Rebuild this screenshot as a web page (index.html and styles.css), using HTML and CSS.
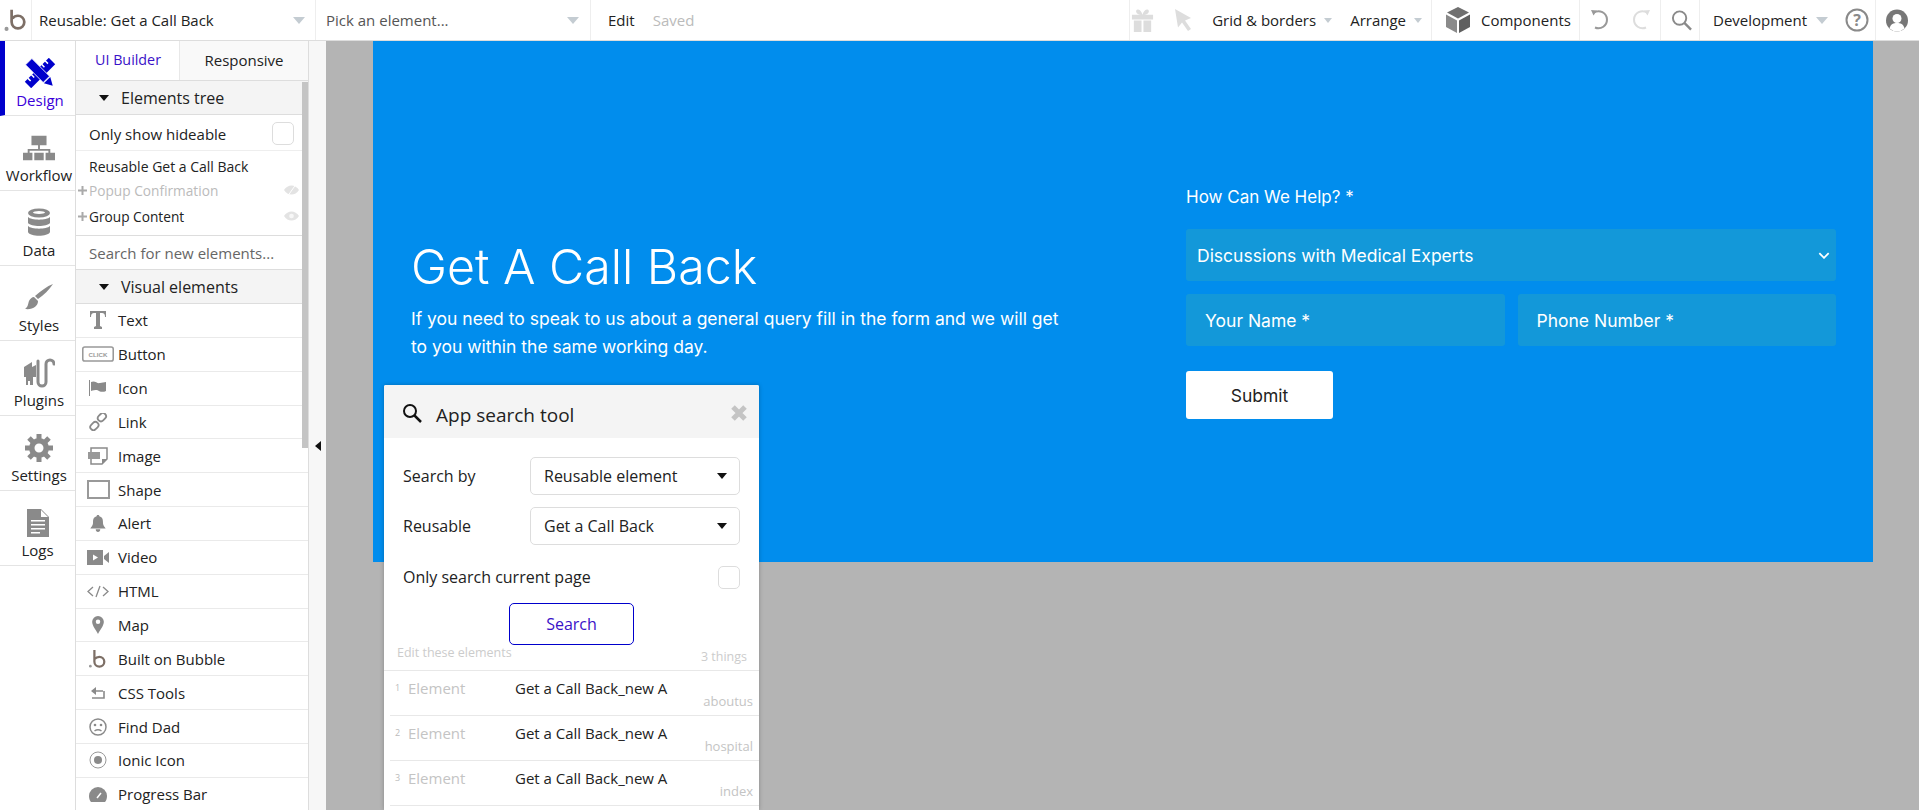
FILE: index.html
```html
<!DOCTYPE html>
<html lang="en">
<head>
<meta charset="utf-8">
<title>Reusable: Get a Call Back</title>
<link rel="stylesheet" href="styles.css">
</head>
<body>
<header class="topbar">
  <div class="cell logo-cell">
    <svg class="logo" viewBox="0 0 26 28"><circle cx="3" cy="24.500" r="2.400" fill="#999"/><path d="M9 2v14.500a7.500 7.500 0 1 0 7.500-7.500c-2.600 0-5 1.300-6.500 3.300" fill="none" stroke="#7d6f66" stroke-width="3.200"/></svg>
  </div>
  <div class="cell picker picker-a"><span>Reusable: Get a Call Back</span><i class="caret"></i></div>
  <div class="cell picker picker-b"><span class="muted-dark">Pick an element...</span><i class="caret"></i></div>
  <div class="cell edit-cell"><span>Edit</span><span class="saved">Saved</span></div>
  <div class="cell tools">
    <svg class="ic gift" viewBox="0 0 26 26"><path fill="#ddd" d="M2 7h22v5H2zM4 13h8v12H4zM14 13h8v12h-8zM11.500 7C6 7 5 2 8 1.500c2.500-.4 4 2.500 5 5.500 1-3 2.500-5.900 5-5.500C21 2 20 7 14.500 7z"/></svg>
    <svg class="ic cursor" viewBox="0 0 18 22"><path fill="#ddd" d="M0 0l16 9-6 2.500 6 8.500-3 2-6-8.500-4 5z"/></svg>
    <span class="tool-label grid-l">Grid &amp; borders</span><i class="caret small"></i>
    <span class="tool-label arrange-l">Arrange</span><i class="caret small"></i>
  </div>
  <div class="cell comp">
    <svg class="ic cube" viewBox="0 0 24 26"><path fill="#707070" d="M12 0l11 5.500-11 6-11-6z"/><path fill="#8a8a8a" d="M0 7.500l11 6V26L0 20z"/><path fill="#5f5f5f" d="M24 7.500l-11 6V26l11-6z"/></svg>
    <span class="tool-label">Components</span>
  </div>
  <div class="cell history">
    <svg class="ic undo" viewBox="0 0 20 22"><path fill="none" stroke="#999" stroke-width="2" d="M4 3.500a8.500 8.500 0 1 1 1 15"/><path fill="#999" d="M1 1l6 .5-3.500 5z"/></svg>
    <svg class="ic redo" viewBox="0 0 20 22"><path fill="none" stroke="#ddd" stroke-width="2" d="M16 3.500a8.500 8.500 0 1 0-1 15"/><path fill="#ddd" d="M19 1l-6 .5 3.500 5z"/></svg>
  </div>
  <div class="cell find">
    <svg class="ic search-i" viewBox="0 0 22 22"><circle cx="9" cy="9" r="7" fill="none" stroke="#8a8a8a" stroke-width="2"/><path d="M14 14l7 7" stroke="#8a8a8a" stroke-width="2.500"/></svg>
  </div>
  <div class="cell dev">
    <span class="tool-label">Development</span><i class="caret"></i>
    <svg class="ic help" viewBox="0 0 24 24"><circle cx="12" cy="12" r="10.500" fill="none" stroke="#8a8a8a" stroke-width="2"/><text x="12" y="17.500" text-anchor="middle" class="help-t">?</text></svg>
  </div>
  <div class="cell user">
    <svg class="ic user-i" viewBox="0 0 22 22"><circle cx="11" cy="11" r="11" fill="#777"/><circle cx="11" cy="9" r="4.500" fill="#fff"/><path d="M3.500 19c1-4.500 4-5.500 7.500-5.500s6.500 1 7.500 5.500a11 11 0 0 1-15 0z" fill="#fff"/></svg>
  </div>
</header>

<div class="workspace">
  <nav class="nav">
    <a class="nav-item active">
      <svg class="nav-ic" viewBox="0 0 30 30">
        <g transform="rotate(-45 15 15)"><rect x="-2" y="10.500" width="34" height="9" fill="#0000cc"/><path fill="#fff" d="M2 10h1.500v4H2zM7 10h1.500v4H7zM21.500 10H23v4h-1.500zM26.500 10H28v4h-1.500z"/></g>
        <g transform="rotate(45 15 15)"><rect x="-1" y="10.500" width="25" height="9" fill="#0000cc" stroke="#fff" stroke-width=".8"/><path fill="#0000cc" d="M25 10.500L33 15l-8 4.500z"/></g>
      </svg>
      <span>Design</span>
    </a>
    <a class="nav-item">
      <svg class="nav-ic" viewBox="0 0 34 30"><path fill="#8a8a8a" d="M9 2h16v10H9zM16 12h2v6h-2zM5 16h24v2H5zM5 16h2v5H5zM27 16h2v5h-2zM0 20h10v8H0zM12 20h10v8H12zM24 20h10v8H24z"/></svg>
      <span>Workflow</span>
    </a>
    <a class="nav-item">
      <svg class="nav-ic" viewBox="0 0 24 30"><ellipse cx="12" cy="5" rx="11" ry="4.500" fill="#8a8a8a"/><ellipse cx="12" cy="4.500" rx="6" ry="1.500" fill="#fff"/><path fill="#8a8a8a" d="M1 9c3 3.500 19 3.500 22 0v6c-3 4-19 4-22 0zM1 18c3 3.500 19 3.500 22 0v6c-2 5-20 5-22 0z"/></svg>
      <span>Data</span>
    </a>
    <a class="nav-item">
      <svg class="nav-ic" viewBox="0 0 30 30"><path fill="#8a8a8a" d="M29 1c-4 6-9 11-15 15l-3-3C17 8 23 3 29 1zM10 14l4 4c0 5-5 9-13 8 3-2 3-5 4-8 1-2 3-4 5-4z"/></svg>
      <span>Styles</span>
    </a>
    <a class="nav-item">
      <svg class="nav-ic" viewBox="0 0 32 30"><path fill="#8a8a8a" d="M1 9L9 4v5l4-2v12h-3v8H7v-4H5v4H3v-8H1z"/><path fill="none" stroke="#8a8a8a" stroke-width="3" stroke-linecap="round" d="M15 3v21a4 4 0 0 0 8 0V6a4 4 0 0 1 8 0"/></svg>
      <span>Plugins</span>
    </a>
    <a class="nav-item">
      <svg class="nav-ic" viewBox="0 0 30 30"><circle cx="15" cy="15" r="7.250" fill="none" stroke="#8a8a8a" stroke-width="5.500"/><path stroke="#8a8a8a" stroke-width="5" d="M15 1v7M15 22v7M1 15h7M22 15h7M5 5l5 5M20 20l5 5M25 5l-5 5M10 20l-5 5"/></svg>
      <span>Settings</span>
    </a>
    <a class="nav-item">
      <svg class="nav-ic" viewBox="0 0 24 30"><path fill="#8a8a8a" d="M1 1h14l8 8v20H1z"/><path fill="#fff" d="M15 2l7 7h-7zM5 12h14v1.500H5zM5 16h14v1.500H5zM5 20h14v1.500H5zM5 24h9v1.500H5z"/></svg>
      <span>Logs</span>
    </a>
  </nav>

  <aside class="panel">
    <div class="tabs"><div class="tab on">UI Builder</div><div class="tab">Responsive</div></div>
    <div class="scroll-track"><div class="scroll-thumb"></div></div>
    <div class="section"><i class="down"></i>Elements tree</div>
    <div class="hideable"><span>Only show hideable</span><i class="check"></i></div>
    <div class="tree">
      <div class="node root">Reusable Get a Call Back</div>
      <div class="node faded"><svg class="plus" viewBox="0 0 9 9"><path d="M0 4.500h9M4.500 0v9" stroke="#aaa" stroke-width="2"/></svg>Popup Confirmation
        <svg class="eye" viewBox="0 0 16 10"><path fill="#e3e3e3" d="M0 5c4-6.500 12-6.500 16 0-4 6.500-12 6.500-16 0z"/><path stroke="#fff" d="M12 0L5 10"/></svg></div>
      <div class="node"><svg class="plus" viewBox="0 0 9 9"><path d="M0 4.500h9M4.500 0v9" stroke="#aaa" stroke-width="2"/></svg>Group Content
        <svg class="eye" viewBox="0 0 16 10"><path fill="#e3e3e3" d="M0 5c4-6.500 12-6.500 16 0-4 6.500-12 6.500-16 0z"/><circle cx="8" cy="5" r="2.500" fill="#f7f7f7"/></svg></div>
    </div>
    <div class="search-new">Search for new elements...</div>
    <div class="section vis"><i class="down"></i>Visual elements</div>
    <ul class="items">
      <li><span class="slot"><svg class="e" viewBox="0 0 18 18"><path fill="#8a8a8a" d="M1 0h16v6h-1c0-3-1-4-3-4h-2v13l2 1v2H5v-2l2-1V2H5C3 2 2 3 2 6H1z"/></svg></span>Text</li>
      <li><span class="slot"><svg class="e wide" viewBox="0 0 31 15"><rect x=".75" y=".75" width="29.500" height="13.500" rx="2" fill="#fff" stroke="#999" stroke-width="1.500"/><text x="15.500" y="10" text-anchor="middle" class="click">CLICK</text></svg></span>Button</li>
      <li><span class="slot"><svg class="e" viewBox="0 0 20 16"><path fill="#8a8a8a" d="M1 0h1v16H1zM3 2c4-2 6 2 9 1 2 0 4-1 6-1v9c-4 2-7 0-9-1-2 0-4 0-6 1z"/></svg></span>Icon</li>
      <li><span class="slot"><svg class="e" viewBox="0 0 20 20"><g fill="none" stroke="#8a8a8a" stroke-width="2"><rect x="9.500" y="1.500" width="10" height="7" rx="3.500" transform="rotate(-45 14 5)"/><rect x="1" y="11" width="10" height="7" rx="3.500" transform="rotate(-45 6 14.500)"/></g></svg></span>Link</li>
      <li><span class="slot"><svg class="e" viewBox="0 0 20 18"><path fill="#fff" stroke="#8a8a8a" stroke-width="1.500" d="M3 1h16v11l-5 5H3z"/><rect y="5" width="12" height="7" fill="#999"/><path fill="#8a8a8a" d="M14 17v-5h5z"/></svg></span>Image</li>
      <li><span class="slot"><i class="shape"></i></span>Shape</li>
      <li><span class="slot"><svg class="e" viewBox="0 0 18 20"><path fill="#8a8a8a" d="M9 1c1 0 1.500.5 1.500 1.500C14 3.500 14.500 6 14.500 9c0 4 1.500 5 3 7H.5c1.500-2 3-3 3-7 0-3 .5-5.500 4-6.500C7.500 1.500 8 1 9 1zM6.500 17h5c0 2-1 3-2.500 3s-2.500-1-2.500-3z"/></svg></span>Alert</li>
      <li><span class="slot"><svg class="e wide2" viewBox="0 0 22 15"><path fill="#8a8a8a" d="M0 0h16v15H0zM17 6l5-4v11l-5-4z"/><path fill="#fff" d="M6 4.500l5 3-5 3z"/></svg></span>Video</li>
      <li><span class="slot"><svg class="e wide2" viewBox="0 0 22 12"><path fill="none" stroke="#8a8a8a" stroke-width="1.300" d="M6 1.500L1 6l5 4.500M16 1.500L21 6l-5 4.500M13 .5L9 11.500"/></svg></span>HTML</li>
      <li><span class="slot"><svg class="e" viewBox="0 0 14 20"><path fill="#8a8a8a" fill-rule="evenodd" d="M7 0a6.500 6.500 0 0 1 6.500 6.500C13.500 11 9 16 7 20 5 16 .5 11 .5 6.500A6.500 6.500 0 0 1 7 0zm0 4a2.500 2.500 0 1 0 0 5 2.500 2.500 0 0 0 0-5z"/></svg></span>Map</li>
      <li><span class="slot"><svg class="e" viewBox="0 0 20 20"><circle cx="1.500" cy="18" r="1.500" fill="#999"/><path d="M6 0v13a5.500 5.500 0 1 0 5.500-5.500C9.500 7.500 7.500 8.500 6.500 10" fill="none" stroke="#7d6f66" stroke-width="2.500"/></svg></span>Built on Bubble</li>
      <li><span class="slot"><svg class="e css" viewBox="0 0 14 12"><path fill="none" stroke="#8a8a8a" stroke-width="1.600" d="M12 4H3M13 4v7H1"/><path fill="#8a8a8a" d="M5 0v8L0 4z"/></svg></span>CSS Tools</li>
      <li><span class="slot"><svg class="e" viewBox="0 0 18 18"><circle cx="9" cy="9" r="8" fill="none" stroke="#8a8a8a" stroke-width="1.500"/><circle cx="6" cy="7" r="1.300" fill="#8a8a8a"/><circle cx="12" cy="7" r="1.300" fill="#8a8a8a"/><path d="M5.500 13c2-1.500 5-1.500 7 0" fill="none" stroke="#8a8a8a" stroke-width="1.500"/></svg></span>Find Dad</li>
      <li><span class="slot"><svg class="e" viewBox="0 0 18 18"><circle cx="9" cy="9" r="8" fill="none" stroke="#999" stroke-width="1"/><circle cx="9" cy="9" r="4" fill="#8a8a8a"/></svg></span>Ionic Icon</li>
      <li><span class="slot"><svg class="e" viewBox="0 0 20 18"><path fill="#8a8a8a" d="M10 2a9 9 0 0 1 9 9c0 3-1 5-2 6H3c-1-1-2-3-2-6a9 9 0 0 1 9-9z"/><path stroke="#fff" stroke-width="1.500" d="M9 13l4-5"/></svg></span>Progress Bar</li>
    </ul>
  </aside>

  <div class="gutter"><i class="collapse"></i></div>

  <main class="canvas">
    <section class="page">
      <div class="intro">
        <h1>Get A Call Back</h1>
        <p>If you need to speak to us about a general query fill in the form and we will get to you within the same working day.</p>
      </div>
      <form class="form">
        <label class="form-label">How Can We Help? *</label>
        <div class="field select"><span>Discussions with Medical Experts</span>
          <svg class="chev" viewBox="0 0 10 6"><path d="M1 1l4 4 4-4" fill="none" stroke="#fff" stroke-width="1.500"/></svg></div>
        <div class="pair">
          <div class="field input">Your Name *</div>
          <div class="field input">Phone Number *</div>
        </div>
        <div class="submit">Submit</div>
      </form>
    </section>
  </main>
</div>

<div class="search-tool">
  <div class="st-head">
    <svg class="st-glass" viewBox="0 0 20 20"><circle cx="8" cy="8" r="6" fill="none" stroke="#111" stroke-width="2"/><path d="M12.500 12.500L19 19" stroke="#111" stroke-width="2.500"/></svg>
    <span class="st-title">App search tool</span>
    <svg class="st-x" viewBox="0 0 18 18"><path d="M3 3l12 12M15 3L3 15" stroke="#c4c4c4" stroke-width="5"/></svg>
  </div>
  <div class="st-body">
    <div class="st-row"><span>Search by</span><div class="st-drop">Reusable element<i class="down"></i></div></div>
    <div class="st-row"><span>Reusable</span><div class="st-drop">Get a Call Back<i class="down"></i></div></div>
    <div class="st-row st-check"><span>Only search current page</span><i class="check"></i></div>
    <div class="st-btn">Search</div>
  </div>
  <div class="st-list-head"><span>Edit these elements</span><span class="things">3 things</span></div>
  <div class="st-result first"><i>1</i><span class="lab">Element</span><span class="val">Get a Call Back_new A</span><span class="where">aboutus</span></div>
  <div class="st-result"><i>2</i><span class="lab">Element</span><span class="val">Get a Call Back_new A</span><span class="where">hospital</span></div>
  <div class="st-result"><i>3</i><span class="lab">Element</span><span class="val">Get a Call Back_new A</span><span class="where">index</span></div>
</div>
</body>
</html>
```
FILE: styles.css
```css
* { box-sizing: border-box; }
html, body { margin: 0; height: 100%; overflow: hidden; }
body { font-family: "Open Sans", sans-serif; font-size: 15px; color: #222; background: #fff; position: relative; display: flex; flex-direction: column; }
i { display: block; font-style: normal; }
h1, p, ul { margin: 0; padding: 0; }

.topbar { display: flex; height: 41px; flex: none; border-bottom: 1px solid #ddd; background: #fff; }
.cell { display: flex; align-items: center; height: 40px; border-right: 1px solid #eee; font-size: 15px; }
.logo-cell { width: 32px; padding-left: 4px; }
.logo { width: 22px; height: 26px; }
.picker { justify-content: space-between; padding: 0 10px 0 7px; }
.picker-a { width: 284px; }
.picker-b { width: 275px; padding-left: 10px; padding-right: 11px; }
.muted-dark { color: #555; }
.caret { width: 0; height: 0; border-left: 6px solid transparent; border-right: 6px solid transparent; border-top: 7px solid #c4ccd2; flex: none; }
.caret.small { border-left-width: 4.500px; border-right-width: 4.500px; border-top-width: 5px; margin-left: 8px; }
.edit-cell { flex: 1; padding-left: 17px; gap: 18px; }
.saved { color: #bbb; }
.ic { display: block; flex: none; }
.tools { border-right: 1px solid #eee; padding-right: 9px; }
.gift { width: 25px; height: 25px; margin-right: 20px; }
.cursor { width: 18px; height: 22px; margin-right: 19px; }
.tool-label { white-space: nowrap; }
.arrange-l { margin-left: 18px; }
.comp { width: 148px; padding-left: 14px; gap: 11px; }
.cube { width: 24px; height: 26px; }
.history { width: 81px; padding-left: 10px; gap: 21px; }
.undo, .redo { width: 20px; height: 22px; }
.find { width: 39px; padding-left: 10px; }
.search-i { width: 21px; height: 22px; }
.dev { width: 176px; padding-left: 13px; }
.dev .caret { margin-left: 9px; }
.help { width: 24px; height: 24px; margin-left: 17px; }
.help-t { font: 700 16px "Open Sans", sans-serif; fill: #8a8a8a; }
.user { border-right: 0; width: 43px; padding-left: 10px; }
.user-i { width: 22px; height: 25px; }

.workspace { flex: 1; display: flex; min-height: 0; }
.nav { width: 76px; flex: none; border-right: 1px solid #ddd; display: flex; flex-direction: column; }
.nav-item { height: 75px; display: flex; flex-direction: column; align-items: center; justify-content: flex-end; padding: 0 0 5px 3px; gap: 2px; border-bottom: 1px solid #e4e4e4; }
.nav-item:last-child { padding-left: 0; }
.nav-item.active { border-left: 5px solid #0000cc; color: #3a00d9; height: 75px; padding-left: 0; border-bottom: 1px solid #e4e4e4; }
.nav-ic { height: 30px; width: 32px; }

.panel { width: 232px; flex: none; position: relative; overflow: hidden; }
.tabs { display: flex; height: 40px; border-bottom: 1px solid #ddd; }
.tab { display: flex; align-items: center; justify-content: center; width: 129px; background: #f9f9f9; border-left: 1px solid #e8e8e8; padding-bottom: 2px; }
.tab.on { width: 103px; background: #fff; color: #3a12c8; border-left: 0; font-size: 14.300px; padding-left: 1px; }
.scroll-track { position: absolute; right: 0; top: 41px; width: 6px; height: 366px; }
.scroll-thumb { height: 100%; background: #c4c4c4; }
.section { height: 34px; background: #f4f4f4; border-bottom: 1px solid #ddd; display: flex; align-items: center; padding-left: 23px; gap: 12px; font-size: 16px; }
.down { width: 0; height: 0; border-left: 5.500px solid transparent; border-right: 5.500px solid transparent; border-top: 6px solid #111; flex: none; }
.hideable { height: 36px; display: flex; align-items: center; justify-content: space-between; padding: 2px 14px 0 13px; border-bottom: 1px solid #eee; }
.check { width: 22px; height: 23px; border: 1px solid #ddd; border-radius: 5px; background: #fff; flex: none; }
.tree { height: 85px; border-bottom: 1px solid #ddd; font-size: 13.700px; }
.node { height: 26px; position: relative; padding-left: 13px; display: flex; align-items: center; }
.node.root { padding-top: 5px; font-size: 14px; }
.node.faded { color: #bbb; }
.node:last-child { height: 27px; }
.plus { position: absolute; left: 2px; top: 9px; width: 9px; height: 9px; display: block; }
.eye { position: absolute; right: 9px; top: 8px; width: 15px; height: 10px; }
.search-new { height: 34px; color: #666; display: flex; align-items: center; padding-left: 13px; border-bottom: 1px solid #ddd; }
.section.vis { height: 34px; }
.items { list-style: none; }
.items li { height: 33.850px; display: flex; align-items: center; border-bottom: 1px solid #eaeaea; }
.slot { width: 42px; flex: none; padding-left: 6px; display: flex; justify-content: center; padding-right: 4px; }
.e { width: 20px; height: 18px; display: block; }
.e.wide { width: 32px; height: 16px; }
.e.wide2 { width: 22px; height: 15px; }
.e.css { width: 14px; height: 12px; }
.click { font: 700 6px "Liberation Sans", sans-serif; fill: #999; }
.shape { width: 23px; height: 19px; border: 2px solid #999; background: #fff; }

.gutter { width: 18px; flex: none; background: #f7f7f7; border-left: 1px solid #ddd; display: flex; align-items: center; justify-content: center; padding-top: 41px; }
.collapse { width: 0; height: 0; border-top: 5px solid transparent; border-bottom: 5px solid transparent; border-right: 6px solid #111; }
.canvas { flex: 1; background: #b4b4b4; padding-left: 47px; min-width: 0; }

.page { width: 1500px; height: 521px; background: #018ded; color: #fff; display: flex; font-family: Inter, sans-serif; padding-left: 38px; }
.intro { width: 775px; padding-top: 198px; }
h1 { font-weight: 300; font-size: 48.300px; line-height: 56px; }
p { font-size: 17.500px; line-height: 28px; width: 655px; margin-top: 10px; }
.form { width: 650px; padding-top: 144px; display: flex; flex-direction: column; }
.form-label { font-size: 17px; line-height: 24px; margin-bottom: 20px; }
.field { background: #1398d9; border-radius: 3px; height: 52px; display: flex; align-items: center; font-size: 17.500px; }
.select { justify-content: space-between; padding: 0 6px 0 11px; }
.chev { width: 12px; height: 7px; }
.pair { display: flex; gap: 13px; margin-top: 13px; }
.input { flex: 1; padding-left: 19px; }
.submit { width: 147px; height: 48px; background: #fff; color: #222; border-radius: 3px; display: flex; align-items: center; justify-content: center; margin-top: 25px; font-size: 17.500px; }

.search-tool { position: absolute; left: 384px; top: 385px; width: 375px; height: 425px; background: #fff; box-shadow: 0 0 4px rgba(0,0,0,.25); border-radius: 2px 2px 0 0; overflow: hidden; }
.st-head { height: 53px; background: #f4f4f4; display: flex; align-items: center; padding: 3px 11px 0 18px; }
.st-glass { width: 20px; height: 20px; }
.st-title { font-size: 19px; margin-left: 14px; flex: 1; padding-top: 3px; }
.st-x { width: 18px; height: 18px; }
.st-body { padding: 19px 19px 0 19px; }
.st-row { display: flex; align-items: center; justify-content: space-between; margin-bottom: 12px; font-size: 16px; }
.st-drop { width: 210px; height: 38px; border: 1px solid #ddd; border-radius: 5px; display: flex; align-items: center; justify-content: space-between; padding: 0 12px 0 13px; font-size: 16px; }
.st-check { height: 30px; margin-top: 17px; margin-bottom: 11px; }
.st-btn { width: 125px; height: 42px; border: 1px solid #0000cc; border-radius: 5px; color: #3a12c8; margin: 0 auto 0 106px; display: flex; align-items: center; justify-content: center; font-size: 16px; }
.st-list-head { height: 26px; border-bottom: 1px solid #e8e8e8; display: flex; justify-content: space-between; padding: 0 12px 0 13px; font-size: 12.500px; color: #ccc; line-height: 16px; }
.things { padding-top: 4px; }
.st-result { height: 45px; margin-left: 6px; border-bottom: 1px solid #e8e8e8; position: relative; display: flex; padding-top: 7px; font-size: 15px; line-height: 20px; }
.st-result i { width: 13px; margin-left: 5px; font-size: 9px; color: #bbb; flex: none; }
.st-result .lab { width: 107px; color: #c4c4c4; flex: none; }
.st-result .where { position: absolute; right: 6px; top: 21px; font-size: 13px; line-height: 18px; color: #c4c4c4; }
```
